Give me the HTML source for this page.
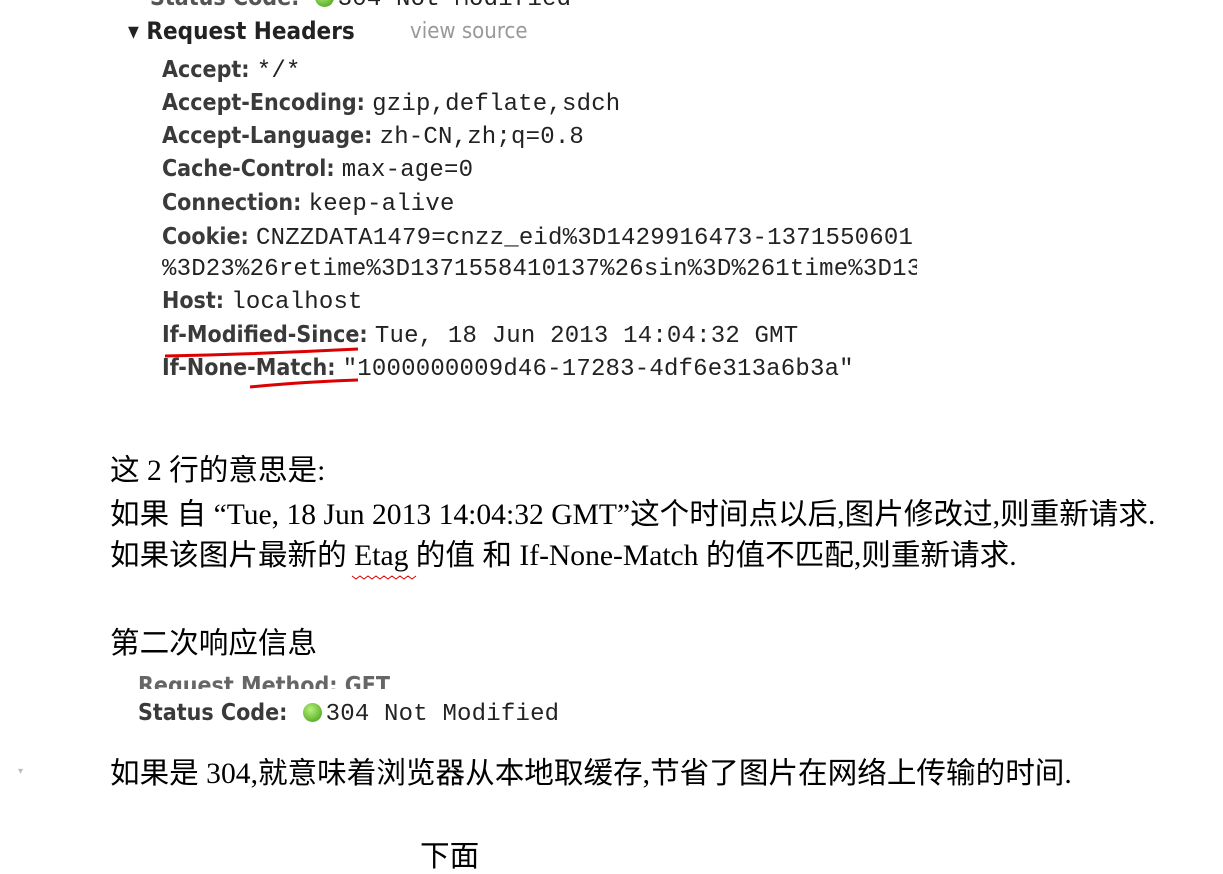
<!DOCTYPE html>
<html><head><meta charset="utf-8"><style>
body{margin:0;width:1223px;height:860px;background:#fff;position:relative;overflow:hidden}
.a{position:absolute;white-space:nowrap}
.l{font-family:"DejaVu Sans Condensed","Liberation Sans",sans-serif;font-size:23px;color:#3a3a3a;font-weight:bold;letter-spacing:0}
.m{font-family:"Liberation Mono",monospace;font-size:24px;color:#222;font-weight:normal;letter-spacing:0.2px}
.c{font-family:"Liberation Serif","WenQuanYi Zen Hei",sans-serif;font-size:29.6px;color:#000;letter-spacing:0;line-height:34px}
.dot{display:inline-block;width:19px;height:19px;border-radius:50%;background:radial-gradient(circle at 40% 35%,#b8f07a,#3a9a10);vertical-align:-2px;margin:0 4px 0 8px}
</style></head><body>
<div class="a l" style="left:150px;top:-15px;color:#555">Status Code: <span class="dot"></span><span class="m">304 Not Modified</span></div>
<div class="a l" style="left:128px;top:17px;font-size:24px;color:#222">▾ Request Headers</div>
<div class="a" style="left:410px;top:19px;font-family:'DejaVu Sans Condensed',sans-serif;font-size:22px;color:#999">view source</div>
<div class="a l" style="left:162px;top:57px">Accept: <span class="m">*/*</span></div>
<div class="a l" style="left:162px;top:90px">Accept-Encoding: <span class="m">gzip,deflate,sdch</span></div>
<div class="a l" style="left:162px;top:123px">Accept-Language: <span class="m">zh-CN,zh;q=0.8</span></div>
<div class="a l" style="left:162px;top:156px">Cache-Control: <span class="m">max-age=0</span></div>
<div class="a l" style="left:162px;top:190px">Connection: <span class="m">keep-alive</span></div>
<div class="a l" style="left:162px;top:224px">Cookie: <span class="m">CNZZDATA1479=cnzz_eid%3D1429916473-1371550601</span></div>
<div class="a m" style="left:162px;top:256px;width:755px;overflow:hidden">%3D23%26retime%3D1371558410137%26sin%3D%261time%3D13</div>
<div class="a l" style="left:162px;top:288px">Host: <span class="m">localhost</span></div>
<div class="a l" style="left:162px;top:322px">If-Modified-Since: <span class="m">Tue, 18 Jun 2013 14:04:32 GMT</span></div>
<div class="a l" style="left:162px;top:355px">If-None-Match: <span class="m">"1000000009d46-17283-4df6e313a6b3a"</span></div>
<svg class="a" style="left:0;top:0" width="1223" height="860"><path d="M165 356 Q260 354 358 349" stroke="#d00" stroke-width="3" fill="none"/><path d="M250 387 Q300 382 358 380" stroke="#d00" stroke-width="3" fill="none"/><path d="M352 576 l4 3 4-3 4 3 4-3 4 3 4-3 4 3 4-3 4 3 4-3 4 3 4-3 4 3 4-3 4 3 4-3" stroke="#d00" stroke-width="1" fill="none"/></svg>
<div class="a c" style="left:110px;top:454px">这 2 行的意思是:</div>
<div class="a c" style="left:110px;top:498px">如果 自 “Tue, 18 Jun 2013 14:04:32 GMT”这个时间点以后,图片修改过,则重新请求.</div>
<div class="a c" style="left:110px;top:539px">如果该图片最新的 Etag 的值 和 If-None-Match 的值不匹配,则重新请求.</div>
<div class="a c" style="left:110px;top:627px">第二次响应信息</div>
<div class="a l" style="left:138px;top:675px;color:#666;height:14px;overflow:hidden;line-height:1">Request Method: GET</div>
<div class="a l" style="left:138px;top:700px">Status Code: <span class="dot"></span><span class="m">304 Not Modified</span></div>
<div class="a" style="left:18px;top:766px;color:#bbb;font-size:10px">▾</div>
<div class="a c" style="left:110px;top:757px">如果是 304,就意味着浏览器从本地取缓存,节省了图片在网络上传输的时间.</div>
<div class="a c" style="left:420px;top:840px">下面</div>
</body></html>
